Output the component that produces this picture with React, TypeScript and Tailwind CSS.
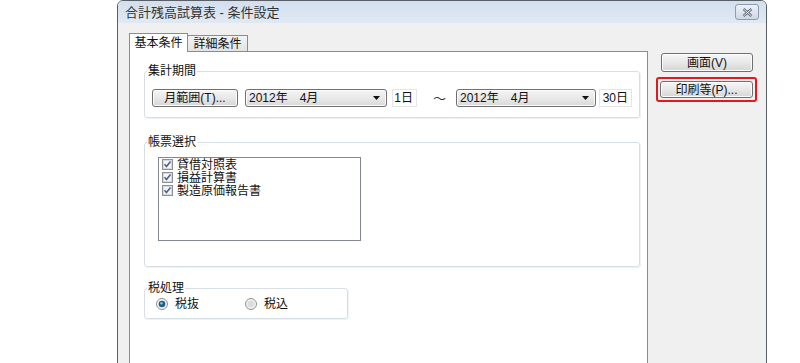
import type { ReactNode } from 'react';

const font = { fontFamily: '"Liberation Sans", "Noto Sans CJK JP", sans-serif' };

function WinButton({ children, className = '' }: { children: ReactNode; className?: string }) {
  return (
    <div
      className={`flex items-center justify-center rounded-[3px] border border-[#707070] bg-gradient-to-b from-[#f6f6f6] via-[#e8e8e8] to-[#d6d6d6] text-[12px] leading-none text-[#111] shadow-[inset_0_0_0_1px_#fcfcfc] ${className}`}
    >
      {children}
    </div>
  );
}

function Combo({ label, className = '' }: { label: string; className?: string }) {
  return (
    <div
      className={`flex h-[18px] items-center justify-between rounded-[3px] border border-[#707070] bg-gradient-to-b from-[#f4f4f4] via-[#e9e9e9] to-[#d9d9d9] pl-[3px] pr-[6px] text-[12px] leading-none text-[#111] shadow-[inset_0_0_0_1px_#fbfbfb] ${className}`}
    >
      <span>{label}</span>
      <svg width="7" height="4" viewBox="0 0 7 4">
        <path d="M0 0h7L3.5 4z" fill="#111" />
      </svg>
    </div>
  );
}

function DayBox({ label, className = '' }: { label: string; className?: string }) {
  return (
    <div
      className={`flex h-[18px] items-center justify-end border border-[#e6e6e6] bg-white pr-[3px] text-[12px] leading-none text-[#111] ${className}`}
    >
      {label}
    </div>
  );
}

function GroupBox({ title, className = '', children }: { title: string; className?: string; children?: ReactNode }) {
  return (
    <div className={`relative rounded-[3px] border border-[#d5dfe5] shadow-[1px_1px_0_#eef2f4] ${className}`}>
      <span className="absolute -top-[8px] left-[2px] bg-white px-[1px] text-[12px] leading-[14px] text-[#111]">
        {title}
      </span>
      {children}
    </div>
  );
}

function CheckBox() {
  return (
    <svg width="11" height="11" viewBox="0 0 11 11" className="shrink-0">
      <rect x="0.5" y="0.5" width="10" height="10" fill="#eef0f5" stroke="#8e8f8f" />
      <rect x="1.5" y="1.5" width="8" height="8" fill="#f6f7fa" stroke="#d4d8e0" />
      <path d="M2.5 5.2l2 2.3 4-5" fill="none" stroke="#4b5f99" strokeWidth="1.6" />
    </svg>
  );
}

function Radio({ checked }: { checked?: boolean }) {
  return (
    <svg width="12" height="12" viewBox="0 0 12 12" className="shrink-0">
      <circle cx="6" cy="6" r="5.5" fill="#f2f2f2" stroke="#8e9194" />
      {checked ? (
        <>
          <circle cx="6" cy="6" r="3.3" fill="#1f5e85" />
          <circle cx="5.4" cy="5.2" r="1.3" fill="#7cc1e8" />
        </>
      ) : (
        <circle cx="6" cy="6" r="3.5" fill="#dcdcdc" />
      )}
    </svg>
  );
}

export default function App() {
  const reports = ['貸借対照表', '損益計算書', '製造原価報告書'];

  return (
    <div className="h-[363px] w-[800px] overflow-hidden bg-white" style={font}>
      <div className="ml-[117px] flex h-[400px] w-[650px] flex-col rounded-t-[6px] border border-[#5a5f66] bg-[#f0f0f0]">
        {/* title bar */}
        <div className="flex h-[22px] shrink-0 items-center justify-between rounded-t-[5px] bg-gradient-to-b from-[#d2dfed] to-[#e0e9f3] pl-[7px] pr-[7px]">
          <span className="text-[13px] leading-none text-[#333]">合計残高試算表 - 条件設定</span>
          <div className="flex h-[16px] w-[24px] items-center justify-center rounded-[3px] border border-[#8c9bb0] bg-gradient-to-b from-[#eef2f7] to-[#cdd7e3]">
            <svg width="11" height="9" viewBox="0 0 11 9">
              <path d="M1.5 1l8 7M9.5 1l-8 7" stroke="#5a6474" strokeWidth="2.4" />
              <path d="M1.5 1l8 7M9.5 1l-8 7" stroke="#ffffff" strokeWidth="0.9" />
            </svg>
          </div>
        </div>

        <div className="flex flex-1">
          {/* tab control */}
          <div className="flex w-[530px] flex-col pl-[11px] pt-[10px]">
            <div className="flex h-[18px] items-end">
              <div className="relative z-10 -mb-px flex h-[19px] w-[59px] items-center justify-center border border-b-0 border-[#898c95] bg-white text-[12px] leading-none text-[#111]">
                基本条件
              </div>
              <div className="flex h-[16px] w-[60px] items-center justify-center border border-b-0 border-l-0 border-[#898c95] bg-gradient-to-b from-[#f3f3f3] to-[#e3e3e3] text-[12px] leading-none text-[#111]">
                詳細条件
              </div>
            </div>
            <div className="flex flex-1 flex-col border border-b-0 border-[#898c95] bg-white pl-[14px] pr-[7px] pt-[19px]">
              <GroupBox title="集計期間" className="h-[47px]">
                <div className="flex items-center pl-[7px] pt-[17px]">
                  <WinButton className="h-[18px] w-[86px]">月範囲(T)...</WinButton>
                  <Combo label="2012年　4月" className="ml-[7px] w-[142px]" />
                  <DayBox label="1日" className="ml-[5px] w-[25px]" />
                  <span className="ml-[16px] text-[13px] leading-none text-[#333]">～</span>
                  <Combo label="2012年　4月" className="ml-[10px] w-[140px]" />
                  <DayBox label="30日" className="ml-[3px] w-[33px]" />
                </div>
              </GroupBox>

              <GroupBox title="帳票選択" className="mt-[24px] h-[125px]">
                <div className="ml-[13px] mt-[14px] flex h-[84px] w-[203px] flex-col border border-[#828790] bg-white pl-[3px]">
                  {reports.map((r) => (
                    <div key={r} className="flex h-[13px] items-center gap-[4px] text-[12px] leading-none text-[#111]">
                      <CheckBox />
                      <span>{r}</span>
                    </div>
                  ))}
                </div>
              </GroupBox>

              <GroupBox title="税処理" className="mt-[21px] h-[31px] w-[204px]">
                <div className="flex items-center pl-[11px] pt-[9px] text-[12px] leading-none text-[#111]">
                  <div className="flex w-[89px] items-center gap-[7px]">
                    <Radio checked />
                    <span>税抜</span>
                  </div>
                  <div className="flex items-center gap-[7px]">
                    <Radio />
                    <span>税込</span>
                  </div>
                </div>
              </GroupBox>
            </div>
          </div>

          {/* right buttons */}
          <div className="flex flex-1 flex-col pt-[30px]">
            <WinButton className="ml-[13px] h-[19px] w-[92px]">画面(V)</WinButton>
            <div className="ml-[8px] mt-[5px] w-[101px] rounded-[3px] border-2 border-[#e0191f] p-[2px]">
              <WinButton className="h-[17px] w-full">印刷等(P)...</WinButton>
            </div>
          </div>
        </div>
      </div>
    </div>
  );
}
